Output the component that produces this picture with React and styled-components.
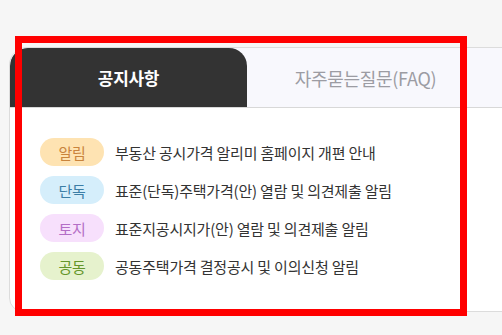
import React from "react";
import styled, { createGlobalStyle } from "styled-components";

const Global = createGlobalStyle`
  html, body { margin: 0; padding: 0; background: #f6f6f6; overflow: hidden; }
  body { font-family: "Noto Sans CJK KR", "Noto Sans", sans-serif; }
  #root { width: 502px; height: 335px; }
`;

const Page = styled.div`
  position: relative;
  width: 502px;
  height: 335px;
  padding: 47px 0 0 9px;
  box-sizing: border-box;
  overflow: hidden;
`;

const Card = styled.div`
  width: 540px;
  height: 265px;
  box-sizing: border-box;
  background: #fff;
  border: 1px solid #dcdcdc;
  border-radius: 18px 18px 18px 14px;
  overflow: hidden;
  display: flex;
  flex-direction: column;
`;

const TabBar = styled.div`
  display: flex;
  height: 59px;
  background: #f8f8fd;
  border-bottom: 1px solid #d8d8d8;
  flex-shrink: 0;
`;

const Tab = styled.div`
  width: 237px;
  display: flex;
  align-items: center;
  justify-content: center;
  font-size: ${(p) => (p.$active ? "17px" : "18px")};
  letter-spacing: -0.3px;
  font-weight: ${(p) => (p.$active ? 700 : 400)};
  color: ${(p) => (p.$active ? "#fff" : "#9c9ca3")};
  background: ${(p) => (p.$active ? "#333333" : "transparent")};
  border-radius: ${(p) => (p.$active ? "18px 18px 0 0" : "0")};
`;

const List = styled.ul`
  list-style: none;
  margin: 0;
  padding: 30px 0 0 30px;
  display: flex;
  flex-direction: column;
  gap: 10px;
`;

const Row = styled.li`
  display: flex;
  align-items: center;
  gap: 11px;
  height: 28px;
`;

const Badge = styled.span`
  width: 64px;
  height: 28px;
  border-radius: 14px;
  display: flex;
  align-items: center;
  justify-content: center;
  font-size: 15px;
  letter-spacing: -0.3px;
  background: ${(p) => p.$bg};
  color: ${(p) => p.$fg};
`;

const Title = styled.span`
  font-size: 15px;
  letter-spacing: -0.2px;
  color: #333;
`;

const Highlight = styled.div`
  position: absolute;
  left: 15px;
  top: 36px;
  width: 452px;
  height: 280px;
  box-sizing: border-box;
  border: 7px solid #ff0000;
  pointer-events: none;
`;

const items = [
  { tag: "알림", bg: "#fee3b2", fg: "#c9843d", text: "부동산 공시가격 알리미 홈페이지 개편 안내" },
  { tag: "단독", bg: "#d5eefb", fg: "#3c7ea6", text: "표준(단독)주택가격(안) 열람 및 의견제출 알림" },
  { tag: "토지", bg: "#f7e0fc", fg: "#b46ec6", text: "표준지공시지가(안) 열람 및 의견제출 알림" },
  { tag: "공동", bg: "#e6f2cd", fg: "#64962a", text: "공동주택가격 결정공시 및 이의신청 알림" },
];

export default function App() {
  return (
    <Page>
      <Global />
      <Card>
        <TabBar>
          <Tab $active>공지사항</Tab>
          <Tab>자주묻는질문(FAQ)</Tab>
        </TabBar>
        <List>
          {items.map((it) => (
            <Row key={it.tag}>
              <Badge $bg={it.bg} $fg={it.fg}>{it.tag}</Badge>
              <Title>{it.text}</Title>
            </Row>
          ))}
        </List>
      </Card>
      <Highlight />
    </Page>
  );
}
